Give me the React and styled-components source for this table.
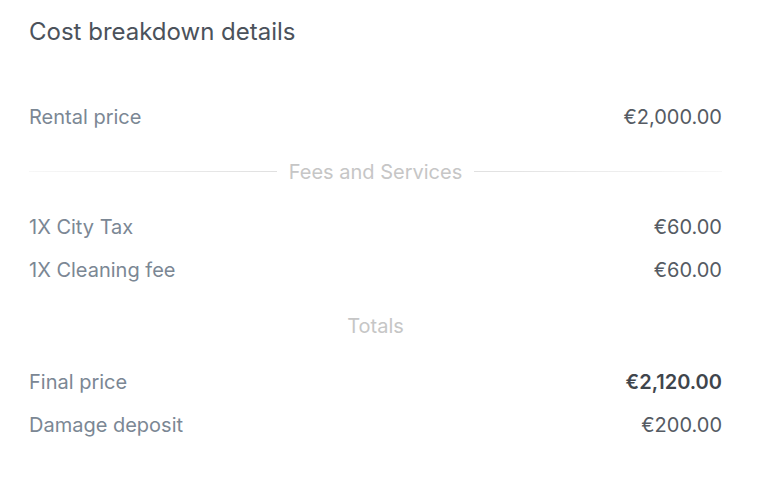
import React from "react";
import styled, { createGlobalStyle } from "styled-components";

const Global = createGlobalStyle`
  html, body { margin: 0; padding: 0; background: #ffffff; }
  body { font-family: Inter, "Liberation Sans", sans-serif; -webkit-font-smoothing: antialiased; }
`;

const Panel = styled.div`
  width: 693px;
  padding: 17px 0 0 29px;
  display: flex;
  flex-direction: column;
`;

const Title = styled.h2`
  margin: 0 0 48px;
  font-size: 24px;
  font-weight: 400;
  line-height: 30px;
  color: #4b525b;
`;

const Row = styled.div`
  display: flex;
  justify-content: space-between;
  align-items: center;
  height: 43px;
  font-size: 20px;
  color: #7b8794;
`;

const Value = styled.span`
  color: ${(p) => (p.$strong ? "#3f454c" : "#555b63")};
  font-weight: ${(p) => (p.$strong ? 600 : 400)};
`;

const Section = styled.div`
  display: flex;
  align-items: center;
  gap: 12px;
  height: ${(p) => (p.$lined ? 67 : 69)}px;
  font-size: 20px;
  color: #c6c6c6;
  &::before,
  &::after {
    content: "";
    flex: 1;
    height: 1px;
    background: ${(p) => (p.$lined ? "linear-gradient(90deg, #f7f7f7, #e0e0e0)" : "transparent")};
  }
  &::after {
    background: ${(p) => (p.$lined ? "linear-gradient(90deg, #e0e0e0, #f7f7f7)" : "transparent")};
  }
`;

const rows = {
  top: [{ label: "Rental price", value: "€2,000.00" }],
  fees: [
    { label: "1X City Tax", value: "€60.00" },
    { label: "1X Cleaning fee", value: "€60.00" },
  ],
  totals: [
    { label: "Final price", value: "€2,120.00", strong: true },
    { label: "Damage deposit", value: "€200.00" },
  ],
};

const Line = ({ label, value, strong }) => (
  <Row>
    <span>{label}</span>
    <Value $strong={strong}>{value}</Value>
  </Row>
);

export default function App() {
  return (
    <>
      <Global />
      <Panel>
        <Title>Cost breakdown details</Title>
        {rows.top.map((r) => (
          <Line key={r.label} {...r} />
        ))}
        <Section $lined>Fees and Services</Section>
        {rows.fees.map((r) => (
          <Line key={r.label} {...r} />
        ))}
        <Section>Totals</Section>
        {rows.totals.map((r) => (
          <Line key={r.label} {...r} />
        ))}
      </Panel>
    </>
  );
}
